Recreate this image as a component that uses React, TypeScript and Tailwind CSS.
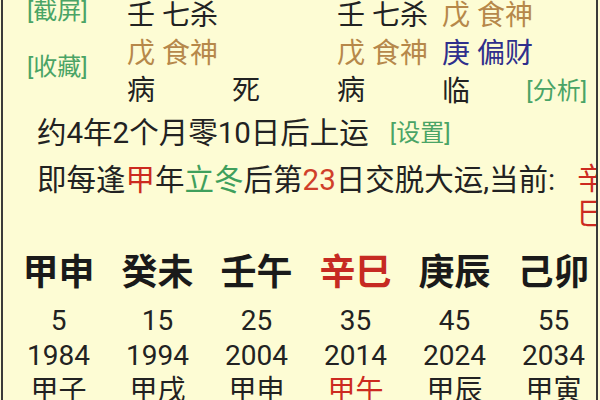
const font = "font-['Roboto','Noto_Sans_CJK_SC',sans-serif]";

const green = "text-[#4aa466]";
const brown = "text-[#b6884a]";
const blue = "text-[#2f2f8c]";
const red = "text-[#cc2a20]";

const dayun = [
  { gz: "甲申", age: "5", year: "1984", liu: "甲子" },
  { gz: "癸未", age: "15", year: "1994", liu: "甲戌" },
  { gz: "壬午", age: "25", year: "2004", liu: "甲申" },
  { gz: "辛巳", age: "35", year: "2014", liu: "甲午", current: true },
  { gz: "庚辰", age: "45", year: "2024", liu: "甲辰" },
  { gz: "己卯", age: "55", year: "2034", liu: "甲寅" },
];

export default function App() {
  return (
    <div className={`h-[400px] w-[600px] overflow-hidden bg-[#fdfcd4] text-[#222] ${font}`}>
      <div className="ml-[1px] h-full w-[597px] overflow-hidden border-x-2 border-[#3a3a3a]">
        {/* pillars */}
        <div className="flex h-[110px]">
          <div className={`-mt-[4px] flex w-[124px] shrink-0 flex-col gap-[26px] pl-[24px] text-[24px] leading-[30px] ${green}`}>
            <span>[截屏]</span>
            <span>[收藏]</span>
          </div>
          <div className="-mt-[3px] grid grid-cols-[105px_105px_105px_145px] text-[28px] leading-[37px] whitespace-nowrap">
            <span>壬 七杀</span>
            <span />
            <span>壬 七杀</span>
            <span className={brown}>戊 食神</span>

            <span className={brown}>戊 食神</span>
            <span />
            <span className={brown}>戊 食神</span>
            <span className={blue}>庚 偏财</span>

            <span>病</span>
            <span>死</span>
            <span>病</span>
            <span className="flex items-center justify-between">
              临<span className={`text-[24px] ${green}`}>[分析]</span>
            </span>
          </div>
        </div>

        {/* qi yun */}
        <div className="mt-[5px] flex items-center pl-[34px] whitespace-nowrap">
          <span className="text-[29.5px] leading-[36px]">约4年2个月零10日后上运</span>
          <span className={`ml-[21px] text-[24px] leading-[36px] ${green}`}>[设置]</span>
        </div>
        <div className="mt-[11px] flex items-start pl-[34px] whitespace-nowrap text-[29.5px]">
          <span className="leading-[36px]">
            即每逢<span className={red}>甲</span>年<span className="text-[#3f9f5c]">立冬</span>后第
            <span className="text-[#d0402a]">23</span>日交脱大运,当前:
          </span>
          <span className={`ml-[22px] flex flex-col leading-[35px] ${red}`}>
            <span>辛</span>
            <span>巳</span>
          </span>
        </div>

        {/* da yun table */}
        <div className="mt-[19px] ml-[6px] grid grid-cols-[repeat(6,99px)] text-center whitespace-nowrap">
          {dayun.map((d) => (
            <div key={d.gz} className="flex flex-col">
              <span className={`h-[52px] text-[36px] font-bold leading-[44px] ${d.current ? "text-[#c62a22]" : "text-[#1a1a1a]"}`}>
                {d.gz}
              </span>
              <span className="text-[28px] leading-[35px]">{d.age}</span>
              <span className="text-[28px] leading-[35px]">{d.year}</span>
              <span className={`text-[28px] leading-[35px] ${d.current ? red : ""}`}>{d.liu}</span>
            </div>
          ))}
        </div>
      </div>
    </div>
  );
}
